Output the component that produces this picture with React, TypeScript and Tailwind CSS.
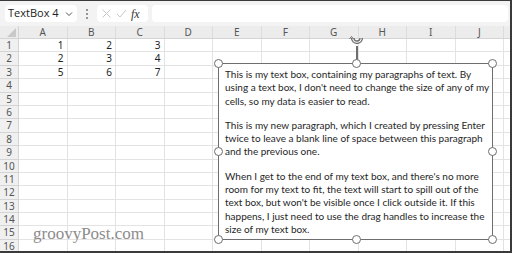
import React from 'react';

const COLS = ['A', 'B', 'C', 'D', 'E', 'F', 'G', 'H', 'I', 'J', ''];
const ROWS = Array.from({ length: 16 }, (_, i) => i + 1);
const DATA: Record<number, number[]> = { 1: [1, 2, 3], 2: [2, 3, 4], 3: [5, 6, 7] };

const PARAGRAPHS = [
  [
    'This is my text box, containing my paragraphs of text. By',
    "using a text box, I don't need to change the size of any of my",
    'cells, so my data is easier to read.',
  ],
  [
    'This is my new paragraph, which I created by pressing Enter',
    'twice to leave a blank line of space between this paragraph',
    'and the previous one.',
  ],
  [
    "When I get to the end of my text box, and there's no more",
    'room for my text to fit, the text will start to spill out of the',
    "text box, but won't be visible once I click outside it. If this",
    'happens, I just need to use the drag handles to increase the',
    'size of my text box.',
  ],
];

// selection handle positions, relative to the text box
const HANDLES = [
  ['left-[-5px] top-[-5px]'],
  ['left-[133px] top-[-5px]'],
  ['right-[-5px] top-[-5px]'],
  ['left-[-5px] top-[83px]'],
  ['right-[-5px] top-[83px]'],
  ['left-[-5px] bottom-[-5px]'],
  ['left-[133px] bottom-[-5px]'],
  ['right-[-5px] bottom-[-5px]'],
];

const FormulaBar = () => (
  <div className="flex h-[25px] items-center gap-[4px] bg-[#f3f3f3] pl-[5px] pr-[2px] font-['Open_Sans',sans-serif]">
    <div className="flex h-[17px] w-[72px] items-center justify-between rounded-[4px] bg-white pl-[3px] pr-[4px] text-[11px] text-[#242424]">
      <span>TextBox 4</span>
      <svg width="8" height="8" viewBox="0 0 8 8" className="text-[#555]">
        <path d="M1 2.5 L4 5.5 L7 2.5" fill="none" stroke="currentColor" strokeWidth="1" />
      </svg>
    </div>
    <div className="flex w-[12px] flex-col items-center gap-[2px]">
      <span className="h-[2px] w-[2px] rounded-full bg-[#777]" />
      <span className="h-[2px] w-[2px] rounded-full bg-[#777]" />
      <span className="h-[2px] w-[2px] rounded-full bg-[#777]" />
    </div>
    <div className="flex h-[17px] w-[51px] items-center gap-[4px] rounded-[4px] bg-white pl-[4px]">
      <svg width="11" height="11" viewBox="0 0 11 11">
        <path d="M1.5 1.5 L9.5 9.5 M9.5 1.5 L1.5 9.5" stroke="#c8c8c8" strokeWidth="1" />
      </svg>
      <svg width="11" height="11" viewBox="0 0 11 11">
        <path d="M1 6 L4 9 L10 2" fill="none" stroke="#c8c8c8" strokeWidth="1" />
      </svg>
      <span className="font-['Liberation_Serif',serif] text-[12px] italic leading-none text-[#333]">fx</span>
    </div>
    <div className="h-[17px] flex-1 rounded-[4px] bg-white" />
  </div>
);

const Grid = () => (
  <div className="font-['Noto_Sans',sans-serif]">
    <div className="flex h-[13px] border-b border-[#d4d4d4] bg-[#ececec] text-[10px] leading-[13px] text-[#555]">
      <div className="relative w-[19px] shrink-0 border-r border-[#d4d4d4]">
        <svg width="9" height="9" viewBox="0 0 9 9" className="absolute bottom-[1px] right-[2px]">
          <path d="M9 0 L9 9 L0 9 Z" fill="#c9c9c9" />
        </svg>
      </div>
      {COLS.map((c, i) => (
        <div
          key={i}
          className="w-[48.5px] shrink-0 border-r border-[#dcdcdc] text-center"
        >
          {c}
        </div>
      ))}
    </div>
    {ROWS.map((r) => (
      <div key={r} className="flex h-[13.4px] text-[10px] leading-[13px]">
        <div className="w-[19px] shrink-0 border-r border-b border-[#d4d4d4] bg-[#f0f0f0] text-center text-[#555]">
          {r}
        </div>
        {COLS.map((_, i) => (
          <div
            key={i}
            className="w-[48.5px] shrink-0 border-r border-b border-[#e3e3e3] pr-[3px] text-right text-[#222]"
          >
            {DATA[r]?.[i] ?? ''}
          </div>
        ))}
      </div>
    ))}
  </div>
);

const TextBox = () => (
  <div className="absolute left-[218px] top-[62px] h-[177px] w-[275px] border-[1.5px] border-[#6e6e6e] bg-white">
    <div className="flex flex-col gap-[11px] pl-[6px] pt-[4px] font-['Lato',sans-serif] text-[10px] leading-[13.3px] text-[#262626]">
      {PARAGRAPHS.map((p, i) => (
        <div key={i}>
          {p.map((line) => (
            <div key={line} className="whitespace-nowrap">
              {line}
            </div>
          ))}
        </div>
      ))}
    </div>
    {/* rotate handle */}
    <div className="absolute left-[137px] top-[-18px] h-[17px] w-[1.5px] bg-[#6e6e6e]" />
    <svg width="16" height="12" viewBox="0 0 16 12" className="absolute left-[130px] top-[-28px]">
      <path d="M2.5 2 A5.5 5.5 0 0 0 13.5 2" fill="none" stroke="#6e6e6e" strokeWidth="1.3" />
      <path d="M5 2 A3 3 0 0 0 11 2" fill="none" stroke="#6e6e6e" strokeWidth="1.3" />
      <path d="M0.5 3 L2.5 0.5 L4.5 3" fill="none" stroke="#6e6e6e" strokeWidth="1" />
    </svg>
    {HANDLES.map(([pos]) => (
      <span
        key={pos}
        className={`absolute h-[9px] w-[9px] rounded-full border-[1.5px] border-[#6e6e6e] bg-white ${pos}`}
      />
    ))}
  </div>
);

export default function App() {
  return (
    <div className="relative h-[253px] w-[512px] overflow-hidden border-t border-r-2 border-b-2 border-[#3a3a3a] bg-white">
      <FormulaBar />
      <Grid />
      <TextBox />
      <div className="absolute left-[33px] top-[224px] font-['Liberation_Serif',serif] text-[17px] leading-[17px] text-[#8c8c8c]">
        groovyPost.com
      </div>
    </div>
  );
}
